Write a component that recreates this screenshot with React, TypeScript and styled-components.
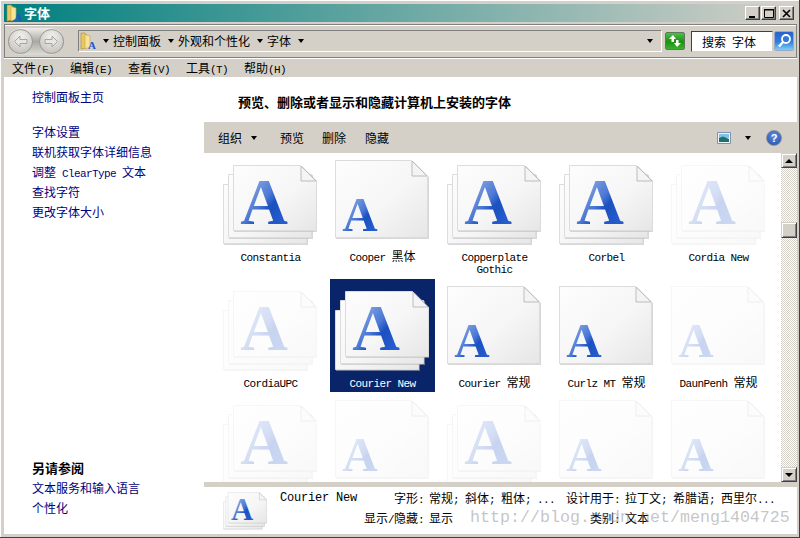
import React, { useId } from "react";
import styled, { createGlobalStyle } from "styled-components";

const Global = createGlobalStyle`
  html, body { margin: 0; padding: 0; background: #d4d0c8; }
  * { box-sizing: border-box; }
  body { font-family: "Noto Sans CJK SC", "Liberation Sans", sans-serif; font-size: 12px; color: #000; }
`;

const Win = styled.div`
  position: relative; width: 800px; height: 538px; overflow: hidden; background: #d4d0c8;
  display: flex; flex-direction: column; padding: 4px 3px 4px 4px;
  box-shadow: inset -1px -1px 0 #404040, inset 1px 1px 0 #fff;
`;
const TitleBar = styled.div`
  flex: none; height: 18px; display: flex; align-items: center; padding: 0 3px 0 2px;
  background: linear-gradient(90deg, #008080 0%, #d4d0c8 100%);
  color: #fff; font-weight: 700; font-size: 13px; line-height: 18px;
`;
const TitleText = styled.span`margin-left: 0;`;
const WinButtons = styled.div`margin-left: auto; display: flex; align-items: center;`;
const WinBtn = styled.button<{ $gap?: number }>`
  width: 15px; height: 14px; padding: 0; margin-left: ${p => p.$gap ?? 0}px; background: #d4d0c8;
  display: flex; align-items: center; justify-content: center;
  border: 1px solid; border-color: #fff #404040 #404040 #fff; box-shadow: inset -1px -1px 0 #808080;
`;
const NavBar = styled.div`
  flex: none; margin-top: 2px; height: 34px; display: flex; align-items: center; padding: 0 2px 0 3px;
  border: 1px solid #808080; box-shadow: inset 0 1px 0 #fff, 0 1px 0 #fff;
`;
const Pill = styled.div`
  width: 56px; height: 27px; border-radius: 14px; display: flex; align-items: center; justify-content: space-between;
  background: linear-gradient(#efeeea, #aaa8a2 50%, #dddcd6); flex: none;
`;
const RoundBtn = styled.div`
  width: 25px; height: 25px; border-radius: 50%; border: 1px solid #9a9a96;
  background: radial-gradient(circle at 50% 30%, #f2f2ef, #c8c6c0 80%);
  display: flex; align-items: center; justify-content: center;
`;
const Address = styled.div`
  margin-left: 14px; flex: 1; height: 22px; display: flex; align-items: center; padding-left: 1px;
  border-top: 1px solid #808080; border-left: 1px solid #808080; border-bottom: 1px solid #fff; border-right: 1px solid #fff;
`;
const Crumb = styled.span`margin-left: 4px; margin-right: 7px; white-space: nowrap; line-height: 16px;`;
const Caret = styled.span<{ $ml?: number; $mr?: number }>`
  display: inline-block; flex: none; width: 0; height: 0; margin-left: ${p => p.$ml ?? 0}px; margin-right: ${p => p.$mr ?? 0}px;
  border-left: 3.5px solid transparent; border-right: 3.5px solid transparent; border-top: 4px solid #000;
`;
const AddressEnd = styled.span`margin-left: auto; margin-right: 8px; display: flex;`;
const GoBtn = styled.div`
  flex: none; margin-left: 3px; width: 20px; height: 18px; border: 1px solid #5a7a5a; border-radius: 2px;
  background: linear-gradient(#4cc04c, #1e8f12 55%, #38b52c); display: flex; align-items: center; justify-content: center;
`;
const SearchBox = styled.div`
  flex: none; margin-left: 6px; width: 82px; height: 21px; background: #fff; padding-left: 10px; line-height: 19px;
  border: 1px solid; border-color: #404040 #d4d0c8 #d4d0c8 #404040; white-space: nowrap;
`;
const SearchBtn = styled.div`
  flex: none; margin-left: 1px; width: 20px; height: 20px; border: 1px solid #9aa8c8; border-radius: 2px;
  background: linear-gradient(#2a62c8, #2f7ee0 55%, #7fd0f5); display: flex; align-items: center; justify-content: center;
`;
const MenuBar = styled.div`flex: none; height: 19px; display: flex; align-items: center; padding-left: 8px;`;
const MenuItem = styled.span`flex: none; width: 58px; height: 16px; white-space: nowrap; line-height: 16px;`;
const M = styled.span`font-family: "Liberation Mono", monospace; font-size: 11px; letter-spacing: -0.6px; white-space: pre;`;
const DName = styled(M)`font-size: 12px; letter-spacing: -0.2px;`;

const Body = styled.div`flex: 1; display: flex; background: #fff; min-height: 0;`;
const Side = styled.div`flex: none; width: 200px; display: flex; flex-direction: column; padding: 10px 0 16px 28px;`;
const SideLink = styled.a`display: block; height: 20px; color: #000080; line-height: 20px; white-space: nowrap;`;
const SideGroup = styled.div<{ $push?: boolean }>`margin-top: ${p => (p.$push ? "auto" : "15px")};`;
const SideHead = styled.div`font-weight: 700; font-size: 13px; line-height: 20px;`;

const Main = styled.div`flex: 1; display: flex; flex-direction: column; min-width: 0;`;
const Header = styled.div`flex: none; height: 45px; padding: 17px 0 0 34px; font-weight: 700; font-size: 13px; line-height: 16px; white-space: nowrap;`;
const Toolbar = styled.div`flex: none; height: 31px; background: #d4d0c8; display: flex; align-items: center; padding: 0 15px 0 14px;`;
const ToolItem = styled.span<{ $w?: number }>`flex: none; display: flex; align-items: center; width: ${p => p.$w ?? 42}px; white-space: nowrap;`;
const ToolRight = styled.div`margin-left: auto; display: flex; align-items: center;`;
const Help = styled.span`
  width: 16px; height: 16px; border-radius: 50%; margin-left: 15px; background: radial-gradient(circle at 50% 35%, #5f8fe0, #1f4ea8);
  border: 1px solid #8a8f9a; color: #fff; font: 700 11px/14px "Liberation Sans", sans-serif; text-align: center;
`;
const Content = styled.div`flex: 1; display: flex; min-height: 0;`;
const Grid = styled.div`
  flex: 1; overflow: hidden; padding-left: 14px; display: grid; align-content: start;
  grid-template-columns: repeat(5, 105px); grid-template-rows: 126px 114px 114px; column-gap: 7px;
`;
const Cell = styled.div<{ $sel?: boolean }>`
  height: 113px; padding-top: 7px; display: flex; flex-direction: column; align-items: center;
  background: ${p => (p.$sel ? "#0a246a" : "transparent")}; color: ${p => (p.$sel ? "#fff" : "#000")};
`;
const IconSlot = styled.div`align-self: flex-start; margin-left: 5px; height: 86px; flex: none;`;
const Label = styled.div`margin-top: 4px; text-align: center; width: 100%;`;
const LabelLine = styled.div`height: 12px; line-height: 12px; white-space: nowrap;`;

const Scroll = styled.div`flex: none; width: 16px; display: flex; flex-direction: column;`;
const ScrollBtn = styled.div`
  flex: none; height: 15px; background: #d4d0c8; display: flex; align-items: center; justify-content: center;
  border: 1px solid; border-color: #d4d0c8 #404040 #404040 #d4d0c8; box-shadow: inset 1px 1px 0 #fff, inset -1px -1px 0 #808080;
`;
const Track = styled.div`
  flex: 1; padding-top: 54px;
  background: conic-gradient(#d4d0c8 25%, #fff 0 50%, #d4d0c8 0 75%, #fff 0) 0 0 / 2px 2px;
`;
const Thumb = styled(ScrollBtn)`height: 16px;`;
const UpArrow = styled.span`width: 0; height: 0; border-left: 4px solid transparent; border-right: 4px solid transparent; border-bottom: 4px solid #000;`;
const DownArrow = styled.span`width: 0; height: 0; border-left: 4px solid transparent; border-right: 4px solid transparent; border-top: 4px solid #000;`;

const Splitter = styled.div`flex: none; height: 5px; background: #d4d0c8;`;
const Details = styled.div`flex: none; height: 47px; display: flex; padding: 1px 0 0 19px;`;
const DetailIcon = styled.div`flex: none; width: 44px; margin: 2px 13px 0 0;`;
const DetailGrid = styled.div`
  display: grid; grid-template-columns: 84px 60px 141px 55px 170px; grid-auto-rows: 20px; align-items: center; white-space: nowrap; line-height: 16px;
`;
const DLabel = styled.span`text-align: right; height: 16px;`;
const DValue = styled.span`padding-left: 5px; height: 16px;`;
const Watermark = styled.div`
  position: absolute; left: 470px; top: 506px; font-family: "Liberation Mono", monospace; font-size: 16.67px; line-height: 24px;
  color: rgba(140, 140, 140, 0.5); white-space: nowrap; pointer-events: none;
`;

function FontIcon({ stack, faded, w = 94, h = 86 }: { stack?: boolean; faded?: boolean; w?: number; h?: number }) {
  const raw = useId().replace(/[^a-zA-Z0-9]/g, "");
  const page = (x: number, y: number, pw: number, ph: number, fold: number) =>
    `M${x} ${y}H${x + pw - fold}L${x + pw} ${y + fold}V${y + ph}H${x}Z`;
  const sheet = (x: number, y: number, pw: number, ph: number, fold: number) => (
    <g>
      <path d={page(x + 1, y + 1, pw, ph, fold)} fill="#b8b8b8" opacity="0.55" />
      <path d={page(x + 0.5, y + 0.5, pw - 1, ph - 1, fold)} fill={`url(#p${raw})`} stroke="#dcdcdc" />
      {fold > 0 && <path d={`M${x + pw - fold} ${y + 1}V${y + fold}H${x + pw - 1}Z`} fill="#f4f4f4" stroke="#bcbcbc" />}
    </g>
  );
  return (
    <svg width={w} height={h} viewBox="0 0 94 86" style={{ display: "block", opacity: faded ? 0.24 : 1 }}>
      <defs>
        <linearGradient id={`p${raw}`} x1="0" y1="0" x2="1" y2="1">
          <stop offset="0" stopColor="#fdfdfd" />
          <stop offset="0.55" stopColor="#f6f6f6" />
          <stop offset="1" stopColor="#e6e6e6" />
        </linearGradient>
        <linearGradient id={`a${raw}`} x1="0.1" y1="0" x2="0.85" y2="1">
          <stop offset="0" stopColor="#b4c6ec" />
          <stop offset="0.5" stopColor="#4a78d4" />
          <stop offset="0.62" stopColor="#1c50c0" />
          <stop offset="1" stopColor="#2a62d4" />
        </linearGradient>
      </defs>
      {stack ? (
        <g>
          {sheet(0, 24, 84, 60, 0)}
          {sheet(5, 14, 84, 64, 0)}
          {sheet(10, 5, 84, 66, 16)}
          <text x={41} y={64} textAnchor="middle" fontFamily="Liberation Serif" fontWeight="700" fontSize="66" fill={`url(#a${raw})`}>A</text>
        </g>
      ) : (
        <g>
          {sheet(0, 0, 93, 78, 16)}
          <text x={25} y={71} textAnchor="middle" fontFamily="Liberation Serif" fontWeight="700" fontSize="49" fill={`url(#a${raw})`}>A</text>
        </g>
      )}
    </svg>
  );
}

function FolderA() {
  return (
    <svg width="18" height="18" viewBox="0 0 18 18" style={{ flex: "none", display: "block" }}>
      <path d="M1 1h4l2 2v13l-6 1z" fill="#e8c860" stroke="#a88a30" strokeWidth=".6" />
      <path d="M5 2.5l5 1.5v11l-5 2z" fill="#f6e49a" stroke="#c4a648" strokeWidth=".6" />
      <text x="12" y="16.5" textAnchor="middle" fontFamily="Liberation Serif" fontWeight="700" fontSize="11" fill="#1f55cc">A</text>
    </svg>
  );
}

const NavArrow = ({ right }: { right?: boolean }) => (
  <svg width="15" height="13" viewBox="0 0 15 13" style={{ transform: right ? "scaleX(-1)" : undefined }}>
    <path d="M7 1L1.5 6.5 7 12V8.5h7v-4H7z" fill="#e6e6e3" stroke="#a4a4a0" />
  </svg>
);

type Item = { name: React.ReactNode[]; stack?: boolean; faded?: boolean; sel?: boolean };
const items: Item[] = [
  { name: [<M>Constantia</M>], stack: true },
  { name: [<><M>Cooper </M>黑体</>] },
  { name: [<M>Copperplate</M>, <M>Gothic</M>], stack: true },
  { name: [<M>Corbel</M>], stack: true },
  { name: [<M>Cordia New</M>], stack: true, faded: true },
  { name: [<M>CordiaUPC</M>], stack: true, faded: true },
  { name: [<M>Courier New</M>], stack: true, sel: true },
  { name: [<><M>Courier </M>常规</>] },
  { name: [<><M>Curlz MT </M>常规</>] },
  { name: [<><M>DaunPenh </M>常规</>], faded: true },
  { name: [], stack: true, faded: true },
  { name: [], faded: true },
  { name: [], stack: true, faded: true },
  { name: [], faded: true },
  { name: [], faded: true },
];

export default function App() {
  return (
    <>
      <Global />
      <Win>
        <TitleBar>
          <FolderA />
          <TitleText>字体</TitleText>
          <WinButtons>
            <WinBtn>
              <svg width="9" height="9" viewBox="0 0 9 9"><path d="M1 7h6v2H1z" fill="#000" /></svg>
            </WinBtn>
            <WinBtn $gap={1}>
              <svg width="10" height="10" viewBox="0 0 10 10"><path d="M.5 1.5h9v8h-9z" fill="none" stroke="#000" /><path d="M0 1h10v1.5H0z" /></svg>
            </WinBtn>
            <WinBtn $gap={3}>
              <svg width="9" height="9" viewBox="0 0 9 9"><path d="M1 1l7 7M8 1L1 8" stroke="#000" strokeWidth="1.6" /></svg>
            </WinBtn>
          </WinButtons>
        </TitleBar>
        <NavBar>
          <Pill>
            <RoundBtn><NavArrow /></RoundBtn>
            <RoundBtn><NavArrow right /></RoundBtn>
          </Pill>
          <Address>
            <FolderA />
            <Caret $ml={5} />
            <Crumb>控制面板</Crumb>
            <Caret />
            <Crumb>外观和个性化</Crumb>
            <Caret />
            <Crumb>字体</Crumb>
            <Caret />
            <AddressEnd><Caret /></AddressEnd>
          </Address>
          <GoBtn>
            <svg width="14" height="12" viewBox="0 0 14 12">
              <path d="M5 0L1 4h2.5v3H6V4h2zM9 12l4-4h-2.5V5H8v3H6z" fill="#fff" />
            </svg>
          </GoBtn>
          <SearchBox>搜索<M> </M>字体</SearchBox>
          <SearchBtn>
            <svg width="16" height="16" viewBox="0 0 16 16">
              <circle cx="10" cy="6" r="4" fill="#3a78d8" stroke="#fff" strokeWidth="1.8" />
              <path d="M7 9l-4 4.5" stroke="#fff" strokeWidth="2.4" />
            </svg>
          </SearchBtn>
        </NavBar>
        <MenuBar>
          <MenuItem>文件<M>(F)</M></MenuItem>
          <MenuItem>编辑<M>(E)</M></MenuItem>
          <MenuItem>查看<M>(V)</M></MenuItem>
          <MenuItem>工具<M>(T)</M></MenuItem>
          <MenuItem>帮助<M>(H)</M></MenuItem>
        </MenuBar>
        <Body>
          <Side>
            <SideLink>控制面板主页</SideLink>
            <SideGroup>
              <SideLink>字体设置</SideLink>
              <SideLink>联机获取字体详细信息</SideLink>
              <SideLink>调整<M> ClearType </M>文本</SideLink>
              <SideLink>查找字符</SideLink>
              <SideLink>更改字体大小</SideLink>
            </SideGroup>
            <SideGroup $push>
              <SideHead>另请参阅</SideHead>
              <SideLink>文本服务和输入语言</SideLink>
              <SideLink>个性化</SideLink>
            </SideGroup>
          </Side>
          <Main>
            <Header>预览、删除或者显示和隐藏计算机上安装的字体</Header>
            <Toolbar>
              <ToolItem $w={62}>组织<Caret $ml={9} /></ToolItem>
              <ToolItem>预览</ToolItem>
              <ToolItem $w={43}>删除</ToolItem>
              <ToolItem>隐藏</ToolItem>
              <ToolRight>
                <svg width="14" height="12" viewBox="0 0 14 12" style={{ display: "block" }}>
                  <path d="M.5.5h13v11H.5z" fill="#eef4fa" stroke="#7f93b0" />
                  <path d="M2 2h10v4H2z" fill="#7fc4e8" />
                  <path d="M2 6l4-1.5L12 7v3H2z" fill="#1f6f6a" />
                </svg>
                <Caret $ml={14} />
                <Help>?</Help>
              </ToolRight>
            </Toolbar>
            <Content>
              <Grid>
                {items.map((it, i) => (
                  <Cell key={i} $sel={it.sel}>
                    <IconSlot><FontIcon stack={it.stack} faded={it.faded} /></IconSlot>
                    <Label>
                      {it.name.map((line, j) => <LabelLine key={j}>{line}</LabelLine>)}
                    </Label>
                  </Cell>
                ))}
              </Grid>
              <Scroll>
                <ScrollBtn><UpArrow /></ScrollBtn>
                <Track><Thumb /></Track>
                <ScrollBtn><DownArrow /></ScrollBtn>
              </Scroll>
            </Content>
            <Splitter />
            <Details>
              <DetailIcon><FontIcon stack w={44} h={40} /></DetailIcon>
              <DetailGrid>
                <DName>Courier New</DName>
                <DLabel>字形<M>:</M></DLabel>
                <DValue>常规<M>; </M>斜体<M>; </M>粗体<M>; ...</M></DValue>
                <DLabel>设计用于<M>:</M></DLabel>
                <DValue>拉丁文<M>; </M>希腊语<M>; </M>西里尔<M>...</M></DValue>
                <span />
                <DLabel>显示<M>/</M>隐藏<M>:</M></DLabel>
                <DValue>显示</DValue>
                <DLabel>类别<M>:</M></DLabel>
                <DValue>文本</DValue>
              </DetailGrid>
            </Details>
          </Main>
        </Body>
        <Watermark>http://blog.csdn.net/meng1404725</Watermark>
      </Win>
    </>
  );
}
